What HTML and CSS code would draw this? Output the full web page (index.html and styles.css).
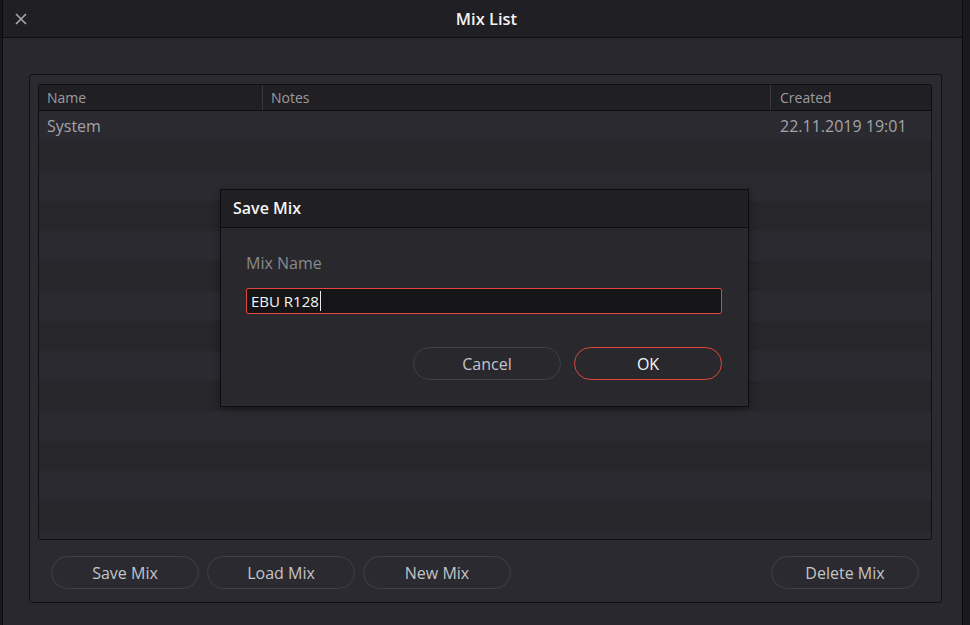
FILE: index.html
```html
<!DOCTYPE html>
<html lang="en">
<head>
    <meta charset="UTF-8">
    <title>Mix List</title>
    <link rel="stylesheet" href="styles.css">
</head>
<body>
    <div class="edge edge-left"></div>

    <div class="window">
        <div class="titlebar">
            <svg class="close" width="12" height="12" viewBox="0 0 12 12">
                <path d="M1 1 L11 11 M11 1 L1 11" stroke="#a8a8ac" stroke-width="1.6" fill="none"/>
            </svg>
            <span class="title">Mix List</span>
        </div>

        <div class="content">
            <div class="panel">
                <div class="table">
                    <div class="thead">
                        <div class="col col-name">Name</div>
                        <div class="col col-notes">Notes</div>
                        <div class="col col-created">Created</div>
                    </div>
                    <div class="tbody">
                        <div class="row">
                            <div class="col col-name">System</div>
                            <div class="col col-notes"></div>
                            <div class="col col-created">22.11.2019 19:01</div>
                        </div>
                        <div class="row"></div>
                        <div class="row"></div>
                        <div class="row"></div>
                        <div class="row"></div>
                        <div class="row"></div>
                        <div class="row"></div>
                        <div class="row"></div>
                        <div class="row"></div>
                        <div class="row"></div>
                        <div class="row"></div>
                        <div class="row"></div>
                        <div class="row"></div>
                        <div class="row"></div>
                        <div class="row"></div>
                    </div>
                </div>

                <div class="actions">
                    <button class="btn">Save Mix</button>
                    <button class="btn">Load Mix</button>
                    <button class="btn">New Mix</button>
                    <span class="spacer"></span>
                    <button class="btn">Delete Mix</button>
                </div>
            </div>
        </div>

        <!-- dialogo Save Mix sobre la lista -->
        <div class="dialog">
            <div class="dialog-head">Save Mix</div>
            <div class="dialog-body">
                <label class="field-label">Mix Name</label>
                <div class="input"><span>EBU R128</span><span class="caret"></span></div>
                <div class="dialog-actions">
                    <button class="btn">Cancel</button>
                    <button class="btn btn-ok">OK</button>
                </div>
            </div>
        </div>
    </div>

    <div class="edge edge-right"></div>
</body>
</html>
```

FILE: styles.css
```css
* { box-sizing: border-box; }

body {
    margin: 0;
    height: 625px;
    display: flex;
    background-color: #141418;
    font-family: "Open Sans", "Noto Sans", sans-serif;
    overflow: hidden;
}

.edge { height: 100%; background-color: #18181c; }
.edge-left { width: 3px; border-right: 1px solid #0c0c0e; }
.edge-right { width: 8px; border-left: 1px solid #0c0c0e; background-color: #1a1a1e; }

.window {
    position: relative;
    flex: 1;
    display: flex;
    flex-direction: column;
    background-color: #28282e;
}

.titlebar {
    flex-shrink: 0;
    height: 38px;
    display: flex;
    align-items: center;
    justify-content: center;
    position: relative;
    background-color: #1f1f24;
    border-bottom: 1px solid #0e0e10;
}
.title { color: #f2f2f2; font-size: 16.5px; font-weight: 600; margin-left: 8px; }
.close { position: absolute; left: 12px; top: 13px; }

.content { flex: 1; min-height: 0; padding: 36px 20px 22px 26px; }

.panel {
    height: 100%;
    display: flex;
    flex-direction: column;
    background-color: #2a2a30;
    border: 1px solid #111114;
    border-radius: 3px;
    padding: 9px 9px 13px 8px;
}

.table {
    flex: 1;
    min-height: 0;
    display: flex;
    flex-direction: column;
    border: 1px solid #101013;
    border-radius: 2px;
    overflow: hidden;
    background-color: #28282d;
}

.thead {
    flex-shrink: 0;
    height: 26px;
    display: flex;
    background-color: #1f1f24;
    border-bottom: 1px solid #0f0f12;
    color: #9c9ca0;
    font-size: 14px;
}
.thead .col { line-height: 25px; }
.thead .col + .col { border-left: 1px solid #3a3a40; }

.col { padding-left: 8px; }
.col-name { width: 223px; }
.col-notes { flex: 1; }
.col-created { width: 161px; padding-left: 9px; }

.tbody { flex: 1; min-height: 0; overflow: hidden; }
.row {
    height: 30px;
    display: flex;
    color: #a4a4a8;
    font-size: 16px;
    line-height: 30px;
    background-color: #2a2a30;
}
.row:nth-child(even) { background-color: #26262b; }
.row .col-created { padding-left: 10px; }

.actions {
    flex-shrink: 0;
    display: flex;
    gap: 8px;
    padding: 16px 13px 0 13px;
}
.spacer { flex: 1; }

.btn {
    width: 148px;
    height: 33px;
    border: 1px solid #404047;
    border-radius: 17px;
    background-color: transparent;
    color: #c4c4c8;
    font-family: "Open Sans", "Noto Sans", sans-serif;
    font-size: 16px;
    padding: 0;
}

/* dialogo */
.dialog {
    position: absolute;
    left: 217px;
    top: 189px;
    width: 529px;
    height: 218px;
    border: 1px solid #0d0d0f;
    background-color: #28282d;
    box-shadow: 0 2px 8px rgba(0, 0, 0, 0.35);
}
.dialog-head {
    height: 38px;
    line-height: 37px;
    padding-left: 12px;
    background-color: #1f1f24;
    border-bottom: 1px solid #0d0d0f;
    color: #f4f4f4;
    font-size: 16px;
    font-weight: 600;
}
.dialog-body { padding: 24px 26px 0 25px; }
.field-label {
    display: block;
    color: #8a8a8e;
    font-size: 16px;
    line-height: 22px;
}
.input {
    margin-top: 14px;
    height: 26px;
    display: flex;
    align-items: center;
    padding-left: 4px;
    background-color: #151517;
    border: 1px solid #e0463c;
    border-radius: 2px;
    color: #f6f6f6;
    font-size: 15px;
}
.caret { width: 1px; height: 20px; background-color: #e8e8e8; margin-left: 1px; }

.dialog-actions {
    display: flex;
    justify-content: flex-end;
    gap: 13px;
    margin-top: 33px;
}
.btn-ok { border-color: #e0463c; color: #f6f6f6; }
```
